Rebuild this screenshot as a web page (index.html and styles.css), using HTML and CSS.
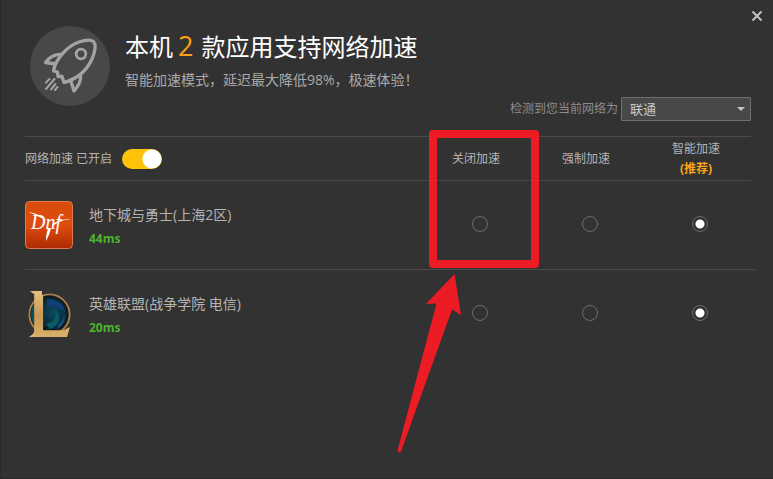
FILE: index.html
```html
<!DOCTYPE html>
<html lang="zh-CN">
<head>
    <meta charset="UTF-8">
    <title>网络加速</title>
    <link rel="stylesheet" href="styles.css">
</head>
<body>
    <div class="window">
        <div class="titlebar">
            <button class="close" type="button" aria-label="关闭">
                <svg width="12" height="12" viewBox="0 0 12 12">
                    <path d="M1.5 1.5 10.5 10.5M10.5 1.5 1.5 10.5" stroke="#c4c4c4" stroke-width="2"/>
                </svg>
            </button>
        </div>

        <header class="header">
            <svg class="rocket" width="80" height="80" viewBox="0 0 80 80">
                <circle cx="40" cy="40" r="40" fill="#484848"/>
                <g fill="none" stroke="#a3a3a3" stroke-width="3.3" stroke-linejoin="round">
                    <path d="M23.5 45C25 34 37 20 49 16C55 14 60 13 63.5 15.5C66.5 19 65 26 62 33C57 44 47 53 34 56.5L32 50.5L28 50.5L27.5 46Z"/>
                    <circle cx="51" cy="28" r="4.8" stroke-width="2.8"/>
                    <path d="M32 28.5C24 28 19.5 31 15.5 36.5L26 38"/>
                    <path d="M50.5 48C51.5 56 48 60 44 65L40.5 54"/>
                </g>
                <g stroke="#a3a3a3" stroke-width="2" stroke-linecap="round">
                    <path d="M19.5 53 16 56.5M24.5 53 16 63M25.5 58 21 63.5M27.5 61 25 64"/>
                </g>
            </svg>
            <div class="intro">
                <h1 class="title">本机<span class="count">2</span>款应用支持网络加速</h1>
                <p class="subtitle">智能加速模式，延迟最大降低98%，极速体验！</p>
            </div>
            <div class="carrier">
                <label for="carrier">检测到您当前网络为</label>
                <div class="select-box">
                    <select id="carrier">
                        <option>联通</option>
                    </select>
                </div>
            </div>
        </header>

        <table class="apps">
            <thead>
                <tr>
                    <th class="status">
                        <label for="boost">网络加速 已开启</label>
                        <input class="switch" id="boost" type="checkbox" checked>
                    </th>
                    <th>关闭加速</th>
                    <th>强制加速</th>
                    <th>智能加速<strong class="tip">(推荐)</strong></th>
                </tr>
            </thead>
            <tbody>
                <tr>
                    <td class="app">
                        <svg width="48" height="48" viewBox="0 0 48 48">
                            <defs>
                                <linearGradient id="dnf-bg" x1="0" y1="0" x2="0" y2="1">
                                    <stop offset="0" stop-color="#d64b0b"/>
                                    <stop offset="0.5" stop-color="#df4d0d"/>
                                    <stop offset="1" stop-color="#ad2a03"/>
                                </linearGradient>
                            </defs>
                            <rect x="0.5" y="0.5" width="47" height="47" rx="4" fill="url(#dnf-bg)" stroke="#e27a50"/>
                            <text class="dnf" x="6" y="28">Dnf</text>
                            <path d="M3 11C10 12 17 14 21 20C16 16 10 14 3 11ZM27 24C31 20 37 18 46 18C38 19 33 21 28 25ZM26 27C25 32 23 36 21 40C21 34 22 31 23 27Z" fill="#fff"/>
                        </svg>
                        <div class="info">
                            <div class="name">地下城与勇士(上海2区)</div>
                            <div class="ping">44ms</div>
                        </div>
                    </td>
                    <td><input type="radio" name="dnf" aria-label="关闭加速"></td>
                    <td><input type="radio" name="dnf" aria-label="强制加速"></td>
                    <td><input type="radio" name="dnf" aria-label="智能加速" checked></td>
                </tr>
                <tr>
                    <td class="app">
                        <svg class="lol-logo" width="48" height="48" viewBox="0 0 48 48">
                            <defs>
                                <linearGradient id="gold" x1="0" y1="0" x2="0" y2="1">
                                    <stop offset="0" stop-color="#efcf91"/>
                                    <stop offset="0.5" stop-color="#c79a55"/>
                                    <stop offset="1" stop-color="#e6bd78"/>
                                </linearGradient>
                                <radialGradient id="orb" cx="0.6" cy="0.45">
                                    <stop offset="0" stop-color="#0a4a60"/>
                                    <stop offset="0.6" stop-color="#083040"/>
                                    <stop offset="1" stop-color="#061620"/>
                                </radialGradient>
                            </defs>
                            <circle cx="24.5" cy="24.5" r="20" fill="url(#orb)" stroke="#a8814c" stroke-width="2"/>
                            <circle cx="24.5" cy="24.5" r="18" fill="none" stroke="#15191b" stroke-width="2"/>
                            <path d="M22 9C32 9 38 14 40 22C34 17 29 15 22 17Z" fill="#123f78"/>
                            <path d="M21 34C30 32 33 26 29 19C37 25 36 35 25 39Z" fill="#0a5c66"/>
                            <path d="M33 35C37 32 39 28 39 24C41 30 38 36 32 39Z" fill="#164c86"/>
                            <path d="M9 14C5 19 5 29 9 35Z" fill="#0b5058"/>
                            <path d="M5 1H17V5H10ZM10 40V47H4L8 44Z" fill="#e3bd7c"/>
                            <path d="M37 41 45 37 42 47H37Z" fill="#d9ae69"/>
                            <text class="lol" x="5" y="47" fill="url(#gold)">L</text>
                        </svg>
                        <div class="info">
                            <div class="name">英雄联盟(战争学院 电信)</div>
                            <div class="ping">20ms</div>
                        </div>
                    </td>
                    <td><input type="radio" name="lol" aria-label="关闭加速"></td>
                    <td><input type="radio" name="lol" aria-label="强制加速"></td>
                    <td><input type="radio" name="lol" aria-label="智能加速" checked></td>
                </tr>
            </tbody>
        </table>

        <!-- highlight around the "off" column -->
        <svg class="marker" width="144" height="325" viewBox="0 0 144 325">
            <rect x="36" y="5" width="102" height="130" fill="none" stroke="#ed1c24" stroke-width="8" stroke-linejoin="round"/>
            <path d="M57.5 145 64 186 55 180.5 4 322.5Q1.5 325 0.5 321.5L39.5 174.5 29 175Z" fill="#ed1c24"/>
        </svg>
    </div>
</body>
</html>
```
FILE: styles.css
```css
* {
    box-sizing: border-box;
}

body {
    margin: 0;
    background-color: #323232;
    color: #b4b4b4;
    font-family: "Open Sans", "Noto Sans CJK SC", sans-serif;
    font-size: 12px;
    line-height: 20px;
}

.window {
    position: relative;
    min-height: 100vh;
    border-left: 1px solid #2a2a2a;
    border-bottom: 1px solid #2a2a2a;
}

.titlebar {
    display: flex;
    justify-content: flex-end;
    padding: 6px 6px 0 0;
}

.close {
    display: flex;
    align-items: center;
    justify-content: center;
    width: 20px;
    height: 20px;
    padding: 0;
    border: 0;
    background: none;
}

/* header */
.header {
    display: flex;
    min-height: 95px;
    padding: 0 22px 0 29px;
}

.rocket {
    flex: none;
    margin-right: 15px;
}

.intro {
    flex: 1;
    padding-top: 2px;
    white-space: nowrap;
}

.title {
    margin: 0 0 5px;
    color: #fff;
    font-size: 24px;
    font-weight: normal;
    line-height: 36px;
}

.count {
    margin: 0 8px 0 5px;
    color: #ffa00f;
    font-size: 27px;
}

.subtitle {
    margin: 0;
    color: #aaa;
    font-size: 14px;
}

.carrier {
    display: flex;
    align-self: flex-end;
    align-items: center;
    gap: 3px;
    margin-left: -60px;
    color: #8c8c8c;
    white-space: nowrap;
}

.select-box {
    position: relative;
}

.select-box::after {
    content: "";
    position: absolute;
    top: 10px;
    right: 6px;
    border: 4px solid transparent;
    border-top-color: #c8c8c8;
    border-bottom: 0;
    pointer-events: none;
}

.select-box select {
    display: block;
    width: 130px;
    height: 24px;
    padding: 0 8px;
    border: 1px solid #707070;
    border-radius: 1px;
    background-color: #484848;
    color: #c8c8c8;
    font-family: inherit;
    font-size: 13px;
    appearance: none;
}

/* app list */
.apps {
    display: block;
    margin: 15px 18px 0 24px;
}

.apps thead,
.apps tbody {
    display: block;
}

.apps tr {
    display: grid;
    grid-template-columns: 1fr 110px 110px 110px;
    align-items: center;
}

.apps thead tr {
    height: 45px;
    margin-right: 4px;
    border-top: 1px solid #4b4b4b;
    border-bottom: 1px solid #4b4b4b;
}

.apps tbody tr {
    height: 88px;
}

.apps tbody tr + tr {
    height: 89px;
    border-top: 1px solid #4b4b4b;
}

.apps th,
.apps td {
    padding: 0;
    font-weight: normal;
    text-align: center;
}

.apps tbody td {
    padding-bottom: 2px;
}

.apps .status {
    display: flex;
    align-items: center;
    gap: 10px;
}

.tip {
    display: block;
    color: #ffa318;
}

.apps .app {
    display: flex;
    align-items: center;
    gap: 16px;
    padding-bottom: 0;
    text-align: left;
}

.info {
    padding-top: 4px;
}

.name {
    font-size: 14px;
    line-height: 24px;
}

.ping {
    color: #4db32e;
    font-weight: bold;
    line-height: 24px;
}

.dnf {
    fill: #fff;
    font: italic 20px "Liberation Serif", serif;
}

.lol-logo {
    overflow: visible;
}

.lol {
    font: bold 62px "Liberation Sans", sans-serif;
}

/* controls */
.switch {
    width: 40px;
    height: 20px;
    margin: 0;
    border-radius: 10px;
    background: radial-gradient(circle at 30px 10px, #fff 9px, #ffc20a 10px);
    appearance: none;
}

input[type="radio"] {
    display: block;
    width: 16px;
    height: 16px;
    margin: 0 auto;
    border: 1px solid #6c6c6c;
    border-radius: 50%;
    appearance: none;
}

input[type="radio"]:checked {
    background: radial-gradient(circle, #fff 4px, transparent 5px);
}

.marker {
    position: absolute;
    top: 129px;
    right: 232px;
    pointer-events: none;
}
```
